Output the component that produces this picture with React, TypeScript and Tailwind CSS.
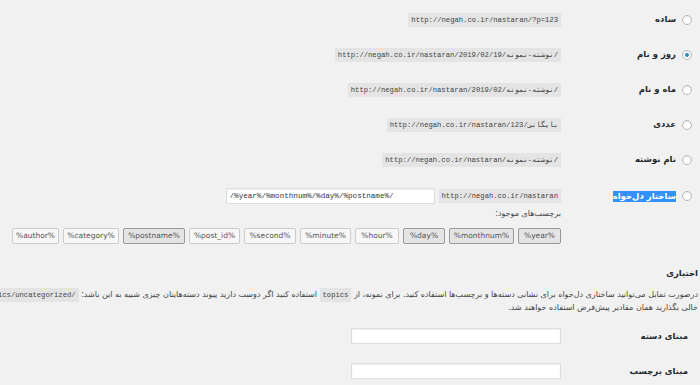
import React from "react";

const fa = "font-['DejaVu_Sans',sans-serif]";
const mono = "font-['Liberation_Mono',monospace]";

interface OptionRowProps {
    label: string;
    url: string;
    checked?: boolean;
}

function Radio({ checked }: { checked?: boolean }) {
    return (
        <span className="flex h-[10px] w-[10px] shrink-0 items-center justify-center rounded-full border border-[#b4b9be] bg-white shadow-[inset_0_1px_2px_rgba(0,0,0,0.1)]">
            {checked && <span className="h-[4px] w-[4px] rounded-full bg-[#1e8cbe]" />}
        </span>
    );
}

function Code({ children }: { children: React.ReactNode }) {
    return (
        <code
            dir="ltr"
            className={`inline-block h-[14px] whitespace-nowrap bg-[#e4e4e4] px-[3px] text-[7.2px] leading-[14px] text-[#444] ${mono}`}
        >
            {children}
        </code>
    );
}

function OptionRow({ label, url, checked }: OptionRowProps) {
    return (
        <div className="flex h-[35px] items-center">
            <label className="flex w-[131px] shrink-0 items-center gap-[6px]">
                <Radio checked={checked} />
                <span className="text-[8.5px] font-bold text-[#23282d]">{label}</span>
            </label>
            <Code>{url}</Code>
        </div>
    );
}

const tags = [
    { t: "%year%", w: "w-[43px]", on: true },
    { t: "%monthnum%", w: "w-[65px]", on: true },
    { t: "%day%", w: "w-[42px]", on: true },
    { t: "%hour%", w: "w-[44px]", on: false },
    { t: "%minute%", w: "w-[51px]", on: false },
    { t: "%second%", w: "w-[52px]", on: false },
    { t: "%post_id%", w: "w-[51px]", on: false },
    { t: "%postname%", w: "w-[62px]", on: true },
    { t: "%category%", w: "w-[56px]", on: false },
    { t: "%author%", w: "w-[47px]", on: false },
];

export default function App() {
    return (
        <div dir="rtl" className={`h-[385px] w-[700px] overflow-hidden bg-[#f1f1f1] text-[#444] ${fa}`}>
            {/* ساختار پیوندها */}
            <div className="pr-[8px] pt-[2px]">
                <OptionRow label="ساده" url="http://negah.co.ir/nastaran/?p=123" />
                <OptionRow label="روز و نام" url="http://negah.co.ir/nastaran/2019/02/19/نوشته-نمونه/" checked />
                <OptionRow label="ماه و نام" url="http://negah.co.ir/nastaran/2019/02/نوشته-نمونه/" />
                <OptionRow label="عددی" url="http://negah.co.ir/nastaran/بایگانی/123" />
                <OptionRow label="نام نوشته" url="http://negah.co.ir/nastaran/نوشته-نمونه/" />

                <div className="flex pt-[11px]">
                    <label className="flex h-[16px] w-[131px] shrink-0 items-center gap-[6px]">
                        <Radio />
                        <span className="bg-[#3390ff] text-[8.5px] font-bold leading-[11px] text-white">ساختار دل‌خواه</span>
                    </label>
                    <div>
                        <div className="flex h-[16px] items-center gap-[4px]">
                            <Code>http://negah.co.ir/nastaran</Code>
                            <input
                                dir="ltr"
                                readOnly
                                value="/%year%/%monthnum%/%day%/%postname%/"
                                className={`h-[16px] w-[209px] border border-[#ddd] bg-white px-[3px] text-[7.6px] text-[#32373c] shadow-[inset_0_1px_2px_rgba(0,0,0,0.07)] outline-none ${mono}`}
                            />
                        </div>
                        <div className="mt-[3px] text-[8px] leading-[14px] text-[#444]">برچسب‌های موجود:</div>
                        <div className="mt-[7px] flex gap-[4px]">
                            {tags.map((b) => (
                                <span
                                    key={b.t}
                                    dir="ltr"
                                    className={`flex h-[16px] ${b.w} items-center justify-center rounded-[2px] border text-[7.5px] text-[#555] ${
                                        b.on ? "border-[#999] bg-[#e4e4e4]" : "border-[#ccc] bg-[#f7f7f7]"
                                    }`}
                                >
                                    {b.t}
                                </span>
                            ))}
                        </div>
                    </div>
                </div>
            </div>

            {/* اختیاری */}
            <div className="pr-[2px]">
                <h2 className="mt-[23px] text-[8.5px] font-bold leading-[12px] text-[#23282d]">اختیاری</h2>
                <p className="mt-[9px] text-[8px] leading-[12px] text-[#444]">
                    <span className="block whitespace-nowrap">
                        درصورت تمایل می‌توانید ساختاری دل‌خواه برای نشانی دسته‌ها و برچسب‌ها استفاده کنید. برای نمونه، از{" "}
                        <Code>topics</Code> استفاده کنید اگر دوست دارید پیوند دسته‌هایتان چیزی شبیه به این باشد:{" "}
                        <Code>http://negah.co.ir/nastaran/topics/uncategorized/</Code> . اگر این‌ها را
                    </span>
                    <span className="block whitespace-nowrap">خالی بگذارید همان مقادیر پیش‌فرض استفاده خواهند شد.</span>
                </p>
            </div>

            <div className="mt-[14px] pr-[12px]">
                <div className="flex h-[16px] items-center">
                    <div className="w-[127px] shrink-0 text-[8.5px] font-bold text-[#23282d]">مبنای دسته</div>
                    <input className="h-[16px] w-[210px] border border-[#ddd] bg-white shadow-[inset_0_1px_2px_rgba(0,0,0,0.07)] outline-none" />
                </div>
                <div className="mt-[19px] flex h-[16px] items-center">
                    <div className="w-[127px] shrink-0 text-[8.5px] font-bold text-[#23282d]">مبنای برچسب</div>
                    <input className="h-[16px] w-[210px] border border-[#ddd] bg-white shadow-[inset_0_1px_2px_rgba(0,0,0,0.07)] outline-none" />
                </div>
            </div>
        </div>
    );
}
